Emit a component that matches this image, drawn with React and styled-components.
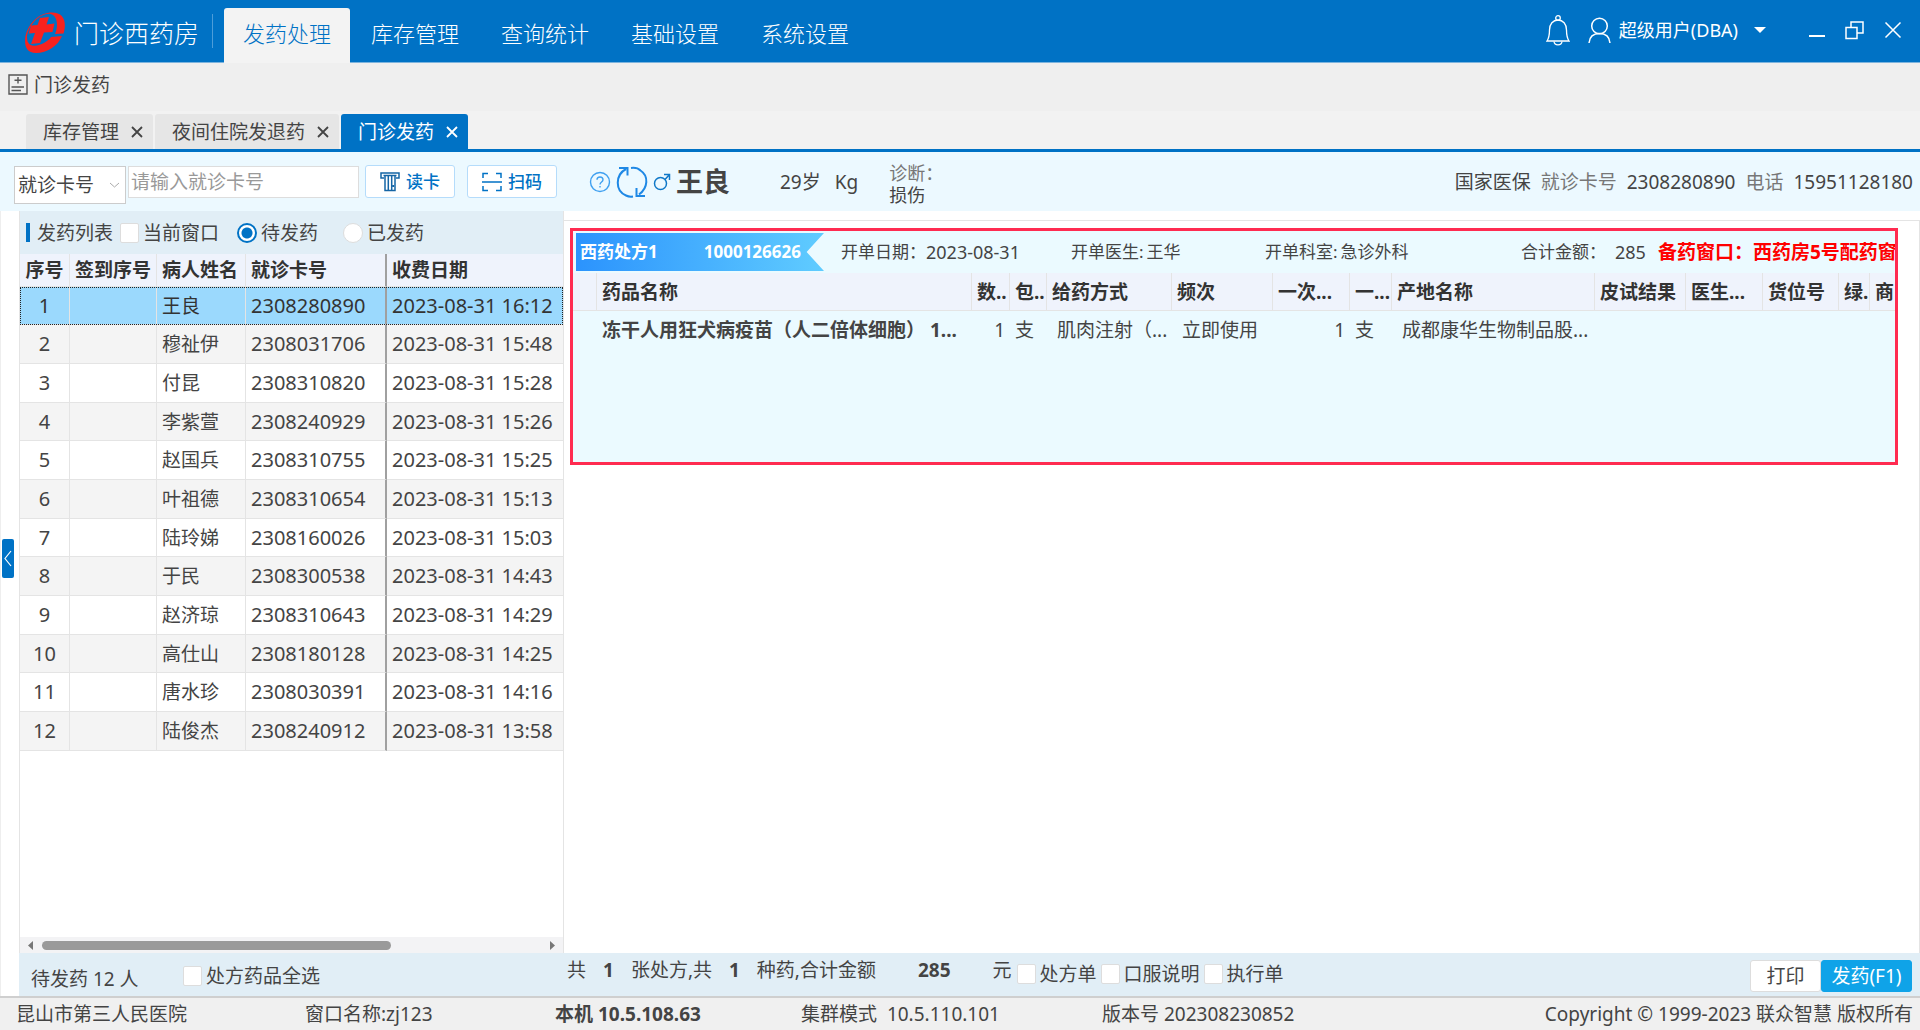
import React, { useState } from 'react';
import styled, { createGlobalStyle, css } from 'styled-components';

const colors = {
    primary: '#0072c5',
    primaryLine: '#7db4de',
    text: '#444444',
    label: '#777777',
    strong: '#333333',
    info: '#ecf9ff',
    bar: '#e1eef6',
    chrome: '#f0f0f0',
    line: '#e4e4e4',
    head: '#eff3fc',
    danger: '#ff2b50',
};

const GlobalStyle = createGlobalStyle`
    * {
        box-sizing: border-box;
    }

    body {
        margin: 0;
        color: ${colors.text};
        font-family: 'Noto Sans', 'Noto Sans CJK SC', sans-serif;
        font-size: 19px;
        line-height: 24px;
    }

    button, input, select {
        color: inherit;
        font: inherit;
    }
`;

const Page = styled.div`
    display: flex;
    flex-direction: column;
    min-height: 100vh;
    background: #ffffff;
`;

/* ---------- header ---------- */

const Header = styled.header`
    display: flex;
    align-items: stretch;
    height: 63px;
    padding-left: 25px;
    border-bottom: 1px solid ${colors.primaryLine};
    background: ${colors.primary};
    color: #ffffff;
`;

const Brand = styled.div`
    display: flex;
    align-items: center;
    gap: 8px;
    padding: 3px 13px 0 0;
    font-size: 25px;
    font-weight: 300;
    line-height: 32px;
    white-space: nowrap;
`;

const BrandDivider = styled.div`
    align-self: center;
    height: 34px;
    margin-right: 11px;
    border-right: 1px solid #4d9dd9;
`;

const Nav = styled.nav`
    display: flex;
    flex: 1;
    padding-top: 8px;
`;

const NavItem = styled.a`
    display: flex;
    align-items: center;
    justify-content: center;
    width: ${props => (props.$active ? 126 : 130)}px;
    margin-bottom: -1px;
    padding-bottom: 5px;
    border-radius: 3px 3px 0 0;
    color: #ffffff;
    font-size: 22px;
    font-weight: 300;
    line-height: 28px;
    text-decoration: none;
    white-space: nowrap;

    ${props => props.$active && css`
        background: #f3f3f3;
        color: ${colors.primary};
    `}
`;

const HeaderTools = styled.div`
    display: flex;
    align-items: center;
    padding: 0 18px 2px 0;
    font-size: 18px;
`;

const ToolButton = styled.button`
    display: flex;
    align-items: center;
    gap: ${props => props.$gap || 0}px;
    margin-right: ${props => props.$after || 0}px;
    padding: 0;
    border: 0;
    background: transparent;
    cursor: pointer;
    white-space: nowrap;
`;

const Caret = styled.span`
    margin-left: 8px;
    border: 6px solid transparent;
    border-top-color: #ffffff;
    border-bottom: 0;
`;

/* ---------- sub header and page tabs ---------- */

const SubHeader = styled.div`
    display: flex;
    align-items: center;
    gap: 6px;
    height: 48px;
    padding: 0 8px 5px;
    background: #efefef;
`;

const TabBar = styled.div`
    display: flex;
    align-items: flex-end;
    gap: 2px;
    height: 41px;
    padding-left: 26px;
    border-bottom: 3px solid ${colors.primary};
    background: #f2f2f2;
`;

const Tab = styled.div`
    display: flex;
    align-items: center;
    gap: 12px;
    height: 35px;
    padding: 0 10px 0 17px;
    border-radius: 3px 3px 0 0;
    background: ${props => (props.$active ? colors.primary : '#e6e6e6')};
    color: ${props => (props.$active ? '#ffffff' : colors.text)};
    white-space: nowrap;

    & > a {
        color: inherit;
        text-decoration: none;
    }
`;

/* ---------- patient bar ---------- */

const PatientBar = styled.section`
    display: flex;
    align-items: center;
    height: 59px;
    padding: 0 7px 0 14px;
    background: ${colors.info};
    white-space: nowrap;
`;

const SelectBox = styled.label`
    display: grid;
    align-items: center;
    width: 112px;
    height: 38px;
    margin: 6px 2px 0 0;
    border: 1px solid #cccccc;
    background: #ffffff;

    & > * {
        grid-area: 1 / 1;
    }

    & > svg {
        justify-self: end;
        margin-right: 6px;
        pointer-events: none;
    }
`;

const CardSelect = styled.select`
    width: 100%;
    height: 100%;
    padding: 0 0 0 3px;
    border: 0;
    background: transparent;
    appearance: none;
`;

const CardInput = styled.input`
    width: 231px;
    height: 32px;
    margin: 0 6px 0 0;
    padding: 0 2px;
    border: 1px solid #dddddd;
    background: #ffffff;

    &::placeholder {
        color: #999999;
        opacity: 1;
    }
`;

const ActionButton = styled.button`
    display: flex;
    align-items: center;
    justify-content: center;
    gap: 6px;
    width: 90px;
    height: 33px;
    margin-right: 12px;
    padding: 0;
    border: 1px solid #b5dcfb;
    border-radius: 3px;
    background: #ffffff;
    color: ${colors.primary};
    font-size: 17px;
    font-weight: 500;
    cursor: pointer;
`;

const PatientIcons = styled.div`
    display: flex;
    align-items: center;
    gap: 5px;
    margin: 0 5px 0 20px;
`;

const PatientName = styled.strong`
    width: 104px;
    font-size: 27px;
    line-height: 36px;
`;

const PatientFact = styled.span`
    margin-right: 14px;
`;

const Diagnosis = styled.dl`
    flex: 1;
    margin: 4px 0 0 17px;
    font-size: 18px;
    line-height: 22px;

    dt {
        color: ${colors.label};
    }

    dd {
        margin: 0;
    }
`;

const Insurance = styled.div`
    display: flex;
    gap: 10px;
`;

const Muted = styled.span`
    color: ${colors.label};
`;

/* ---------- main area ---------- */

const Main = styled.main`
    display: flex;
    flex: 1;
`;

const Rail = styled.div`
    display: flex;
    align-items: center;
    width: 19px;
    padding: 0 0 90px 1px;
    border-left: 1px solid #eeeeee;
`;

const RailHandle = styled.button`
    display: flex;
    align-items: center;
    justify-content: center;
    width: 12px;
    height: 39px;
    padding: 0;
    border: 0;
    border-radius: 2px;
    background: ${colors.primary};
`;

const Workspace = styled.div`
    display: flex;
    flex: 1;
    flex-direction: column;
    min-width: 0;
`;

const Panels = styled.div`
    display: flex;
    flex: 1;
`;

const ListPanel = styled.section`
    display: flex;
    flex-direction: column;
    width: 545px;
    border: solid ${colors.line};
    border-width: 0 1px;
`;

const ListFilter = styled.div`
    display: flex;
    align-items: center;
    height: 43px;
    padding-left: 6px;
    background: ${colors.bar};

    &::before {
        content: '';
        width: 4px;
        height: 19px;
        margin-right: 7px;
        background: ${colors.primary};
    }
`;

const ListTitle = styled.span`
    margin-right: 7px;
`;

const Choice = styled.label`
    display: inline-flex;
    align-items: center;
    gap: 4px;
    margin-right: ${props => props.$after || 0}px;
    white-space: nowrap;
`;

const CheckBox = styled.input.attrs({ type: 'checkbox' })`
    width: 19px;
    height: 20px;
    margin: 0;
    border: 1px solid #dddddd;
    border-radius: 2px;
    background: #ffffff;
    appearance: none;

    &:checked {
        background: ${colors.primary};
    }
`;

const Radio = styled.input.attrs({ type: 'radio' })`
    width: 20px;
    height: 20px;
    margin: 0;
    border: 1px solid #dddddd;
    border-radius: 50%;
    background: #ffffff;
    appearance: none;

    &:checked {
        border: 2px solid ${colors.primary};
        background: radial-gradient(${colors.primary} 0 5px, #ffffff 6px);
    }
`;

const PatientTable = styled.table`
    width: 100%;
    border-collapse: separate;
    border-spacing: 0;
    table-layout: fixed;
    white-space: nowrap;

    th, td {
        padding: 0 0 0 5px;
        border: solid ${colors.line};
        border-width: 0 1px 1px 0;
        text-align: left;
    }

    th:first-child, td:first-child {
        padding: 0;
        text-align: center;
    }

    th:last-child, td:last-child {
        border-right: 0;
    }

    th:nth-child(4), td:nth-child(4) {
        border-right: 2px solid #a0a0a0;
    }

    th {
        height: 33px;
        background: ${colors.head};
        color: ${colors.strong};
    }
`;

const PatientRow = styled.tr`
    height: 39px;
    background: #ffffff;

    &:nth-child(3n + 1) {
        height: 38px;
    }

    &:nth-child(even) {
        background: #f4f4f4;
    }

    ${props => props.$selected && css`
        && {
            outline: 1px dotted #222222;
            outline-offset: -1px;
            background: #9bd9fd;
            color: ${colors.strong};
        }
    `}
`;

const NumberCell = styled.td`
    font-size: 20px;
`;

const ScrollTrack = styled.div`
    display: flex;
    align-items: center;
    gap: 8px;
    height: 16px;
    margin-top: auto;
    padding: 0 8px;
    background: #f3f3f5;
`;

const ScrollLane = styled.div`
    flex: 1;
`;

const ScrollThumb = styled.div`
    width: 70%;
    height: 9px;
    border-radius: 5px;
    background: #9a9a9a;
`;

const DetailPanel = styled.section`
    flex: 1;
    min-width: 0;
    margin-top: 9px;
    padding: 7px 21px 0 6px;
    border: solid ${colors.line};
    border-width: 1px 1px 0 0;
`;

const Prescription = styled.article`
    height: 237px;
    overflow: hidden;
    border: 3px solid ${colors.danger};
    background: #ebfaff;
`;

const PrescriptionHead = styled.header`
    display: flex;
    align-items: center;
    height: 42px;
    padding-left: 3px;
    font-size: 17px;
    white-space: nowrap;
`;

const Ribbon = styled.div`
    display: flex;
    align-items: center;
    justify-content: space-between;
    width: 248px;
    height: 38px;
    margin-right: 17px;
    padding: 0 23px 0 4px;
    background: linear-gradient(90deg, #2b93fd, #60ccff);
    clip-path: polygon(0 0, 100% 0, 93% 50%, 100% 100%, 0 100%);
    color: #ffffff;
    font-weight: 700;
`;

const Field = styled.span`
    display: flex;
    gap: ${props => props.$gap || 0}px;
    width: ${props => props.$width}px;
`;

const FieldNumber = styled.span`
    font-size: 18px;
`;

const PrepWindow = styled.strong`
    flex: 1;
    min-width: 0;
    overflow: hidden;
    color: #ff0000;
    font-size: 19px;
`;

const DrugTable = styled.table`
    width: 100%;
    border-collapse: separate;
    border-spacing: 0;
    table-layout: fixed;
    white-space: nowrap;

    th {
        height: 38px;
        padding: 0 0 0 5px;
        overflow: hidden;
        border: solid ${colors.line};
        border-width: 0 1px 1px 0;
        background: ${colors.head};
        color: ${colors.strong};
        text-align: left;
    }

    th:last-child {
        border-right: 0;
    }

    td {
        height: 38px;
        padding: 0 0 0 10px;
        overflow: hidden;
    }
`;

const DrugName = styled.td`
    && {
        padding-left: 5px;
    }
    font-weight: 700;
`;

const UnitCell = styled.td`
    && {
        padding-left: 5px;
    }
`;

const AmountCell = styled.td`
    && {
        padding: 0 5px 0 0;
    }
    text-align: right;
`;

/* ---------- bottom bars ---------- */

const SummaryBar = styled.div`
    display: flex;
    align-items: center;
    height: 43px;
    padding: 0 8px 0 12px;
    background: ${colors.bar};
    white-space: nowrap;
`;

const ListSummary = styled.div`
    display: flex;
    align-items: center;
    width: 536px;
    padding-top: 2px;
`;

const WaitingCount = styled.span`
    width: 152px;
    padding-top: 6px;
`;

const Total = styled.div`
    display: flex;
    align-items: center;
    gap: 17px;
    margin-right: 5px;
    padding-bottom: 9px;
`;

const Amount = styled.b`
    padding: ${props => (props.$wide ? '0 25px' : '0')};
`;

const PrintOptions = styled.div`
    display: flex;
    flex: 1;
    align-items: center;
    gap: 4px;
    padding-bottom: 2px;
`;

const BarActions = styled.div`
    display: flex;
    padding-top: 3px;
`;

const BarButton = styled.button`
    width: ${props => (props.$primary ? 91 : 71)}px;
    height: 32px;
    padding: 0;
    border: 1px solid ${props => (props.$primary ? '#0fa3e8' : '#dddddd')};
    border-radius: 3px;
    background: ${props => (props.$primary ? '#0fa3e8' : '#ffffff')};
    color: ${props => (props.$primary ? '#ffffff' : colors.text)};
    cursor: pointer;
`;

const StatusBar = styled.footer`
    display: flex;
    align-items: center;
    height: 34px;
    padding: 0 7px 1px 16px;
    border-top: 2px solid #cfcfcf;
    background: ${colors.chrome};
    white-space: nowrap;
`;

const StatusItem = styled.span`
    width: ${props => props.$width}px;
    font-weight: ${props => (props.$bold ? 700 : 400)};
`;

const Copyright = styled.span`
    margin-left: auto;
`;

/* ---------- icons ---------- */

const Stroke = ({ width, height, viewBox, strokeWidth = 1.5, color = 'currentColor', children }) => (
    <svg
        width={width}
        height={height}
        viewBox={viewBox || `0 0 ${width} ${height}`}
        fill="none"
        stroke={color}
        strokeWidth={strokeWidth}
        aria-hidden="true"
    >
        {children}
    </svg>
);

const LogoIcon = () => (
    <svg width="41" height="42" viewBox="0 0 41 42" fill="#f8221e" aria-hidden="true">
        <path d="M30 22C34 13 32 2 24 1.8C14 2 4 13 2 24C1.500 32 6 34.500 12 33.500C19 32 24 28 26 25L37 24C33 34 22 41 11 41C1 41 -1 33 .5 24C4 10 15 .5 27 .5C39 .5 42 10 38.500 21.500Z" />
        <path d="M15 6L24 5L21.500 12.500L29.500 11.500L27.500 20L19 20.500L15 31L6 32L10 21L3.800 21.500L6 13.500L12.500 13Z" />
    </svg>
);

const BellIcon = () => (
    <Stroke width={24} height={31} strokeWidth={1.3}>
        <circle cx="12" cy="3" r="2.3" />
        <path d="M1 26C3 23 3.5 21 3.5 15C3.5 9 7 5 12 5C17 5 20.5 9 20.5 15C20.5 21 21 23 23 26Z" />
        <path d="M8 26.5C8.5 31 15.5 31 16 26.5" />
    </Stroke>
);

const UserIcon = () => (
    <Stroke width={23} height={27} strokeWidth={1.5}>
        <circle cx="11.5" cy="9" r="7.8" />
        <path d="M1 26C1.5 20 5 16.5 11.5 16.5C18 16.5 21.5 20 22 26" />
    </Stroke>
);

const PageIcon = () => (
    <Stroke width={20} height={21} strokeWidth={1.4} color="#555555">
        <path d="M1 1H19V20H1Z M10 3V9.500 M6.500 6.300H13.500 M3.500 13H16 M3.500 16.500H13" />
    </Stroke>
);

const CloseIcon = ({ size = 12, strokeWidth = 1.8 }) => (
    <Stroke width={size} height={size} viewBox="0 0 12 12" strokeWidth={strokeWidth}>
        <path d="M1 1L11 11M11 1L1 11" />
    </Stroke>
);

const ReaderIcon = () => (
    <Stroke width={20} height={20} color="#1565a5">
        <path d="M4 6H1V1H19V6H16 M3.5 3.5H16.5 M5 4V18.5H15V4 M8.3 4V18 M11.7 4V18 M13.3 13V15" />
    </Stroke>
);

const ScanIcon = () => (
    <Stroke width={20} height={20}>
        <path d="M1 6V1.5H6 M14 1.5H19V6 M19 14V18.5H14 M6 18.5H1V14 M0 10H20" />
    </Stroke>
);

const HelpIcon = () => (
    <Stroke width={22} height={22} color="#3fa0f0" strokeWidth={1.4}>
        <circle cx="11" cy="11" r="9.5" />
        <path d="M8 8.8C8 5 14 5 14 8.8C14 11 11 11 11 13.5 M11 15V16.6" />
    </Stroke>
);

const RefreshIcon = () => (
    <Stroke width={32} height={32} color="#1e88e5" strokeWidth={2}>
        <path d="M10 3C-1 9 -1 25 10 29.5C12 30.5 14 31 17 30.5 M3 2H11.5V9.5" />
        <path d="M15 2C19 1.500 22 2 24.500 4.500C33 10 32 22 23 28.500 M20.500 22V30H29" />
    </Stroke>
);

const MaleIcon = () => (
    <Stroke width={18} height={18} color="#0f78c8">
        <circle cx="7.5" cy="10.5" r="6" />
        <path d="M12 6.5L16.5 1.5M11 1.5H16.5V7" />
    </Stroke>
);

const ArrowIcon = ({ flip }) => (
    <svg width="6" height="9" viewBox="0 0 6 9" fill="#777777" aria-hidden="true">
        <path d={flip ? 'M1 0L6 4.5L1 9Z' : 'M5 0L0 4.5L5 9Z'} />
    </svg>
);

/* ---------- data ---------- */

const navItems = ['发药处理', '库存管理', '查询统计', '基础设置', '系统设置'];

const tabs = ['库存管理', '夜间住院发退药', '门诊发药'];

const patients = [
    { name: '王良', card: '2308280890', date: '2023-08-31 16:12' },
    { name: '穆祉伊', card: '2308031706', date: '2023-08-31 15:48' },
    { name: '付昆', card: '2308310820', date: '2023-08-31 15:28' },
    { name: '李紫萱', card: '2308240929', date: '2023-08-31 15:26' },
    { name: '赵国兵', card: '2308310755', date: '2023-08-31 15:25' },
    { name: '叶祖德', card: '2308310654', date: '2023-08-31 15:13' },
    { name: '陆玲娣', card: '2308160026', date: '2023-08-31 15:03' },
    { name: '于民', card: '2308300538', date: '2023-08-31 14:43' },
    { name: '赵济琼', card: '2308310643', date: '2023-08-31 14:29' },
    { name: '高仕山', card: '2308180128', date: '2023-08-31 14:25' },
    { name: '唐水珍', card: '2308030391', date: '2023-08-31 14:16' },
    { name: '陆俊杰', card: '2308240912', date: '2023-08-31 13:58' },
];

const patientColumns = [
    { title: '序号', width: 50 },
    { title: '签到序号', width: 87 },
    { title: '病人姓名', width: 89 },
    { title: '就诊卡号', width: 141 },
    { title: '收费日期' },
];

// the drug name column takes the space that is left
const drugColumns = [
    { title: '', width: 24 },
    { title: '药品名称' },
    { title: '数..', width: 38 },
    { title: '包..', width: 37 },
    { title: '给药方式', width: 125 },
    { title: '频次', width: 101 },
    { title: '一次...', width: 77 },
    { title: '一...', width: 42 },
    { title: '产地名称', width: 203 },
    { title: '皮试结果', width: 91 },
    { title: '医生...', width: 77 },
    { title: '货位号', width: 76 },
    { title: '绿.', width: 31 },
    { title: '商', width: 25 },
];

const Columns = ({ columns }) => (
    <React.Fragment>
        <colgroup>
            {columns.map((column, i) => <col key={i} width={column.width} />)}
        </colgroup>
        <thead>
            <tr>
                {columns.map((column, i) => <th key={i} scope="col">{column.title}</th>)}
            </tr>
        </thead>
    </React.Fragment>
);

const PatientList = () => {
    const [selected, setSelected] = useState(0);
    const [status, setStatus] = useState('waiting');

    return (
        <ListPanel>
            <ListFilter>
                <ListTitle>发药列表</ListTitle>
                <Choice $after={18}><CheckBox />当前窗口</Choice>
                <Choice $after={25}>
                    <Radio name="status" checked={status === 'waiting'} onChange={() => setStatus('waiting')} />
                    待发药
                </Choice>
                <Choice>
                    <Radio name="status" checked={status === 'done'} onChange={() => setStatus('done')} />
                    已发药
                </Choice>
            </ListFilter>
            <PatientTable>
                <Columns columns={patientColumns} />
                <tbody>
                    {patients.map((patient, i) => (
                        <PatientRow key={patient.card} $selected={i === selected} onClick={() => setSelected(i)}>
                            <NumberCell>{i + 1}</NumberCell>
                            <td />
                            <td>{patient.name}</td>
                            <NumberCell>{patient.card}</NumberCell>
                            <NumberCell>{patient.date}</NumberCell>
                        </PatientRow>
                    ))}
                </tbody>
            </PatientTable>
            <ScrollTrack>
                <ArrowIcon />
                <ScrollLane><ScrollThumb /></ScrollLane>
                <ArrowIcon flip />
            </ScrollTrack>
        </ListPanel>
    );
};

const PrescriptionCard = () => (
    <Prescription>
        <PrescriptionHead>
            <Ribbon>
                <span>西药处方1</span>
                <span>1000126626</span>
            </Ribbon>
            <Field $width={230}>开单日期：<FieldNumber>2023-08-31</FieldNumber></Field>
            <Field $width={194} $gap={3}>开单医生: <span>王华</span></Field>
            <Field $width={256} $gap={3}>开单科室: <span>急诊外科</span></Field>
            <Field $width={137} $gap={9}>合计金额：<FieldNumber>285</FieldNumber></Field>
            <PrepWindow>备药窗口：西药房5号配药窗</PrepWindow>
        </PrescriptionHead>
        <DrugTable>
            <Columns columns={drugColumns} />
            <tbody>
                <tr>
                    <td />
                    <DrugName>冻干人用狂犬病疫苗（人二倍体细胞） 1...</DrugName>
                    <AmountCell>1</AmountCell>
                    <UnitCell>支</UnitCell>
                    <td>肌肉注射（...</td>
                    <td>立即使用</td>
                    <AmountCell>1</AmountCell>
                    <UnitCell>支</UnitCell>
                    <td>成都康华生物制品股...</td>
                    <td colSpan={5} />
                </tr>
            </tbody>
        </DrugTable>
    </Prescription>
);

const App = () => (
    <Page>
        <GlobalStyle />
        <Header>
            <Brand><LogoIcon />门诊西药房</Brand>
            <BrandDivider />
            <Nav>
                {navItems.map((item, i) => (
                    <NavItem key={item} href="#" $active={i === 0}>{item}</NavItem>
                ))}
            </Nav>
            <HeaderTools>
                <ToolButton $after={18} aria-label="通知"><BellIcon /></ToolButton>
                <ToolButton $after={43} $gap={8}><UserIcon />超级用户(DBA)<Caret /></ToolButton>
                <ToolButton $after={20} aria-label="最小化">
                    <Stroke width={16} height={20} strokeWidth={2}><path d="M0 16H16" /></Stroke>
                </ToolButton>
                <ToolButton $after={20} aria-label="还原">
                    <Stroke width={19} height={20}><path d="M1 7.5H12V18.5H1Z M6 7V2H18V13H12.5" /></Stroke>
                </ToolButton>
                <ToolButton aria-label="关闭"><CloseIcon size={18} strokeWidth={1} /></ToolButton>
            </HeaderTools>
        </Header>
        <SubHeader><PageIcon />门诊发药</SubHeader>
        <TabBar>
            {tabs.map((tab, i) => (
                <Tab key={tab} $active={i === 2}>
                    <a href="#">{tab}</a>
                    <ToolButton aria-label={`关闭${tab}`}><CloseIcon /></ToolButton>
                </Tab>
            ))}
        </TabBar>
        <PatientBar>
            <SelectBox>
                <CardSelect aria-label="证件类型">
                    <option>就诊卡号</option>
                </CardSelect>
                <Stroke width={9} height={6} strokeWidth={1} color="#aaaaaa"><path d="M0 1L4.5 5L9 1" /></Stroke>
            </SelectBox>
            <CardInput aria-label="就诊卡号" placeholder="请输入就诊卡号" />
            <ActionButton><ReaderIcon />读卡</ActionButton>
            <ActionButton><ScanIcon />扫码</ActionButton>
            <PatientIcons>
                <HelpIcon />
                <RefreshIcon />
                <MaleIcon />
            </PatientIcons>
            <PatientName>王良</PatientName>
            <PatientFact>29岁</PatientFact>
            <PatientFact>Kg</PatientFact>
            <Diagnosis>
                <dt>诊断：</dt>
                <dd>损伤</dd>
            </Diagnosis>
            <Insurance>
                <span>国家医保</span>
                <Muted>就诊卡号</Muted>
                <span>2308280890</span>
                <Muted>电话</Muted>
                <span>15951128180</span>
            </Insurance>
        </PatientBar>
        <Main>
            <Rail>
                <RailHandle aria-label="收起列表">
                    <Stroke width={8} height={17} color="#ffffff" strokeWidth={1.2}><path d="M7 1L1 8.5L7 16" /></Stroke>
                </RailHandle>
            </Rail>
            <Workspace>
                <Panels>
                    <PatientList />
                    <DetailPanel>
                        <PrescriptionCard />
                    </DetailPanel>
                </Panels>
                <SummaryBar>
                    <ListSummary>
                        <WaitingCount>待发药 12 人</WaitingCount>
                        <Choice><CheckBox />处方药品全选</Choice>
                    </ListSummary>
                    <Total>
                        <span>共</span>
                        <Amount>1</Amount>
                        <span>张处方,共</span>
                        <Amount>1</Amount>
                        <span>种药,合计金额</span>
                        <Amount $wide>285</Amount>
                        <span>元</span>
                    </Total>
                    <PrintOptions>
                        <Choice><CheckBox />处方单</Choice>
                        <Choice><CheckBox />口服说明</Choice>
                        <Choice><CheckBox />执行单</Choice>
                    </PrintOptions>
                    <BarActions>
                        <BarButton>打印</BarButton>
                        <BarButton $primary>发药(F1)</BarButton>
                    </BarActions>
                </SummaryBar>
            </Workspace>
        </Main>
        <StatusBar>
            <StatusItem $width={289}>昆山市第三人民医院</StatusItem>
            <StatusItem $width={250}>窗口名称:zj123</StatusItem>
            <StatusItem $width={246} $bold>本机 10.5.108.63</StatusItem>
            <StatusItem $width={301}>集群模式&nbsp; 10.5.110.101</StatusItem>
            <StatusItem>版本号 202308230852</StatusItem>
            <Copyright>Copyright © 1999-2023 联众智慧 版权所有</Copyright>
        </StatusBar>
    </Page>
);

export default App;
